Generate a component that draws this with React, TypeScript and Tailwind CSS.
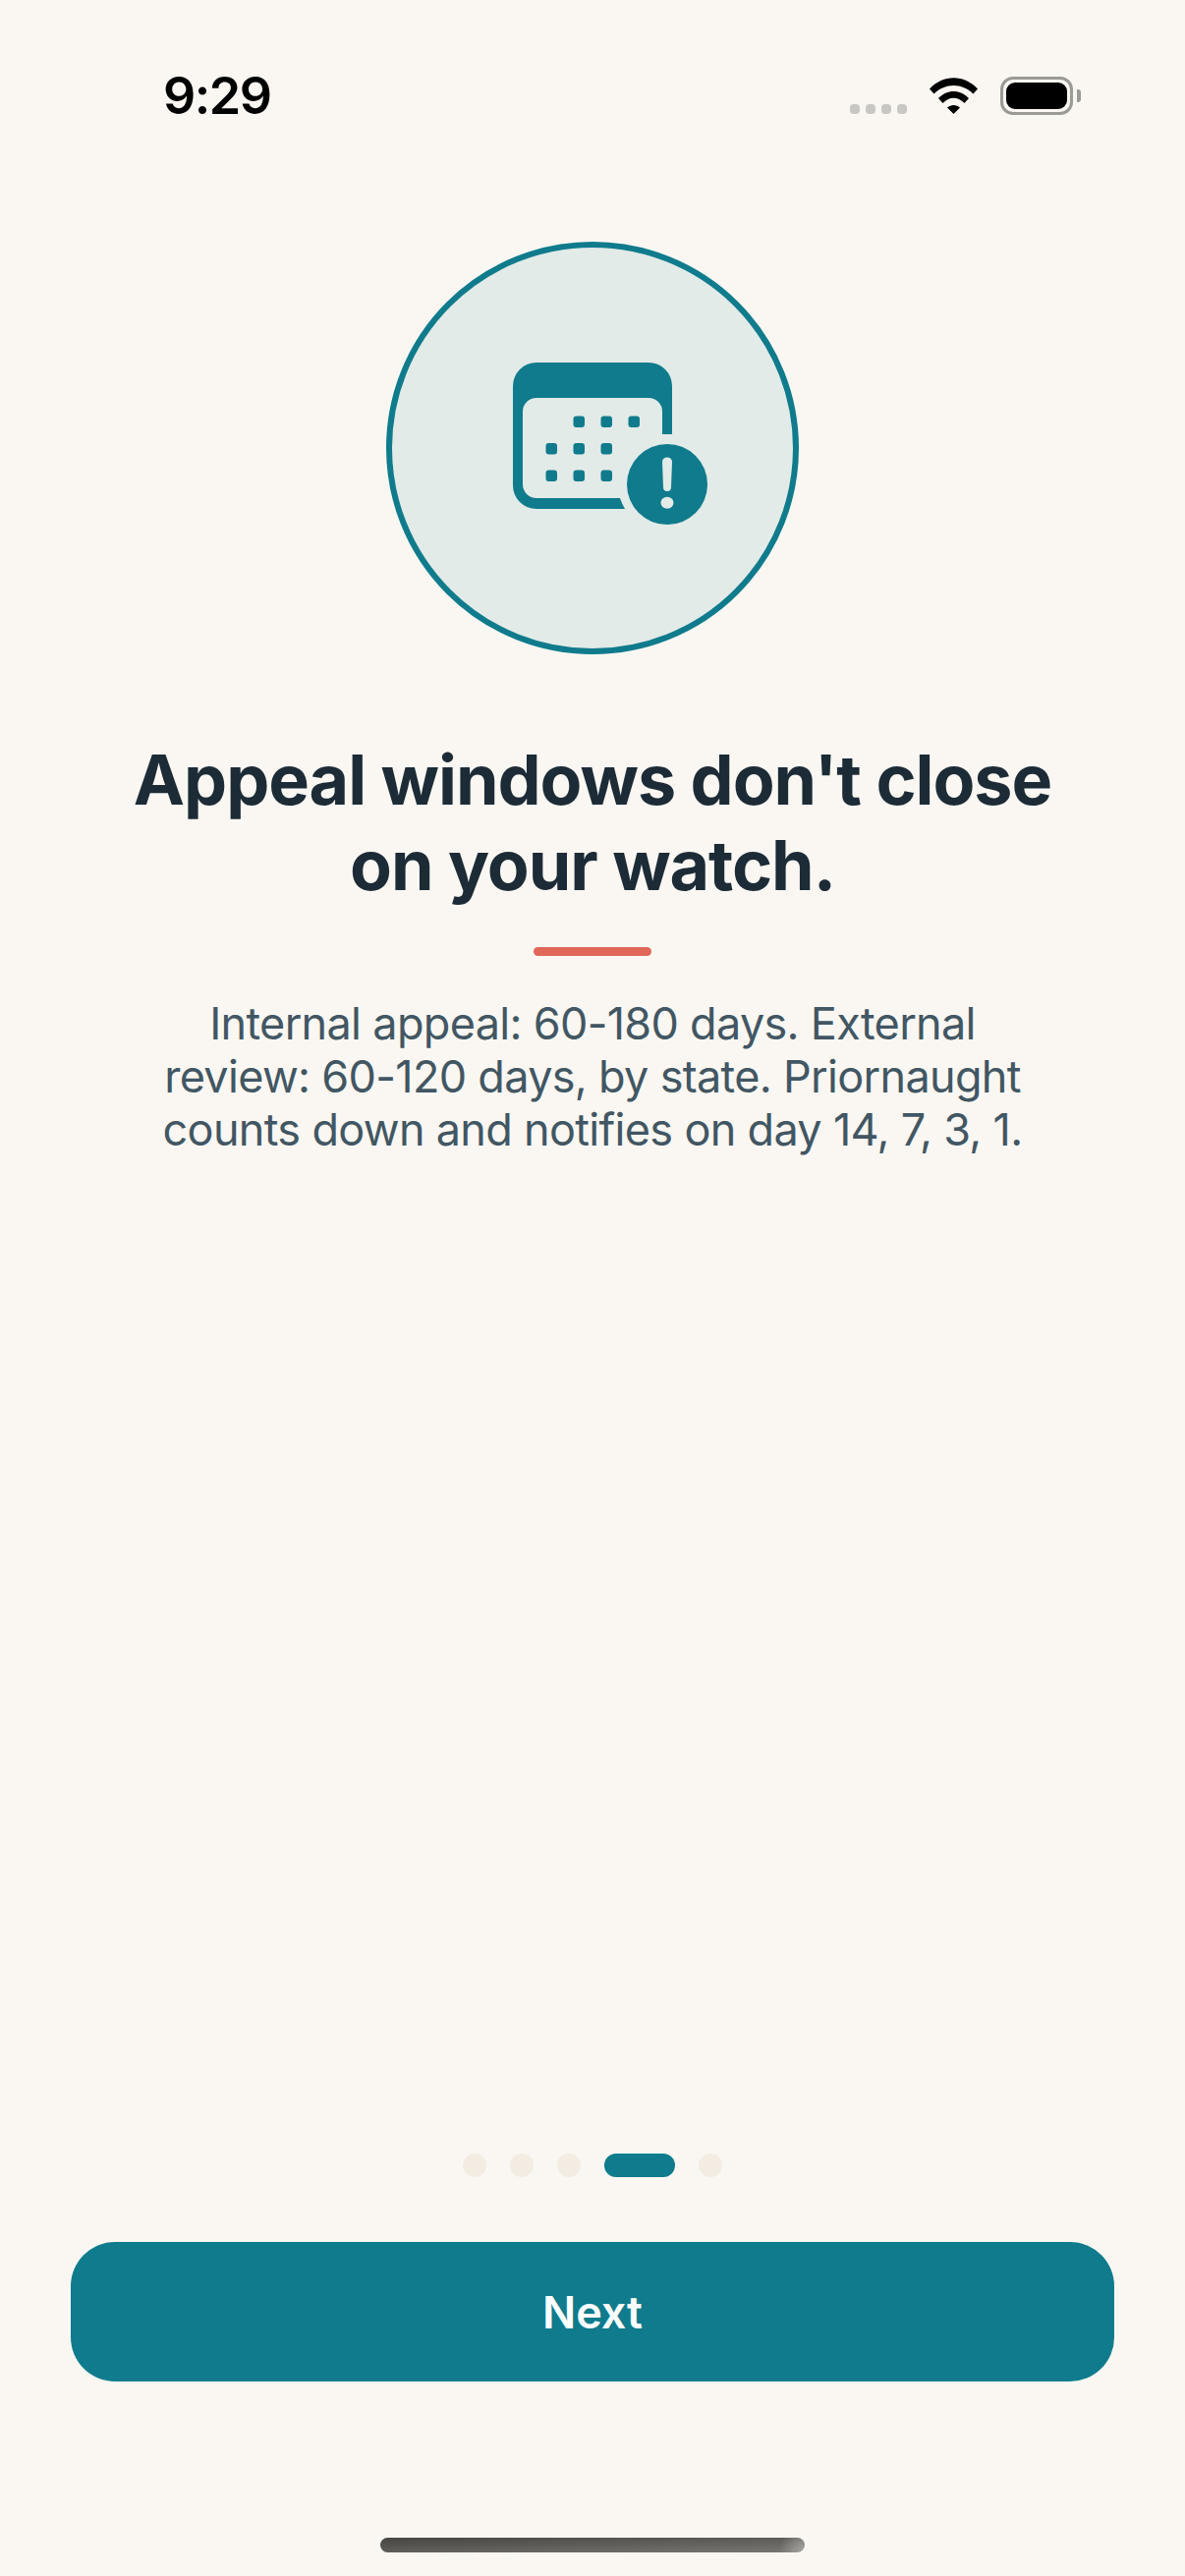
export default function App() {
  const rows = [
    [61.5, 89.5, 117.5].map((x) => [x, 54.5]),
    [33.5, 61.5, 89.5].map((x) => [x, 82]),
    [33.5, 61.5, 89.5].map((x) => [x, 109.5]),
  ].flat();
  return (
    <div className="flex h-[2622px] w-[1206px] flex-col items-center overflow-hidden bg-[#faf7f2] font-['Inter',sans-serif]">
      <div className="flex h-[246px] w-full items-start justify-between pl-[166px] pr-[114px] pt-[72px]">
        <span className="text-[52px] leading-[52px] font-semibold tracking-[-1.5px] text-black">9:29</span>
        <div className="mt-[6px] flex items-start">
          <div className="mr-[23px] mt-[28px] flex gap-[6px]">
            <div className="h-[10px] w-[10px] rounded-[4px] bg-[#c9c7c3]" />
            <div className="h-[10px] w-[10px] rounded-[4px] bg-[#c9c7c3]" />
            <div className="h-[10px] w-[10px] rounded-[4px] bg-[#c9c7c3]" />
            <div className="h-[10px] w-[10px] rounded-[4px] bg-[#c9c7c3]" />
          </div>
          <svg width="49" height="37" viewBox="0 0 49 37" className="mt-[1px] mr-[23px]">
            <path fill="#000" d="M0 11.5 C14 -3.5 35 -3.5 49 11.5 L44.5 16.5 C33 5 16 5 4.5 16.5 Z" />
            <path fill="#000" d="M9 21 C18 11.5 31 11.5 40 21 L35.5 26 C28.5 19 20.5 19 13.5 26 Z" />
            <path fill="#000" d="M18 30.5 C22 27 27 27 31 30.5 L24.5 37 Z" />
          </svg>
          <div className="relative h-[39px] w-[74px] rounded-[13px] border-[3px] border-[#9b9a95] p-[3px]">
            <div className="h-full w-full rounded-[9px] bg-black" />
            <div className="absolute -right-[11px] top-[10px] h-[13px] w-[4px] rounded-r-[3px] bg-[#9b9a95]" />
          </div>
        </div>
      </div>

      <div className="flex h-[420px] w-[420px] shrink-0 items-center justify-center rounded-full border-[6px] border-[#0f7b8c] bg-[#e2ebe8]">
        <svg width="198" height="165" viewBox="0 0 198 165" className="mb-[9px] ml-[36px]">
          <path
            fill="#0f7b8c"
            d="M24 0 H138 A24 24 0 0 1 162 24 V73 H152 V50 A14 14 0 0 0 138 36 H24 A14 14 0 0 0 10 50 V124 A14 14 0 0 0 24 138 H109 Q111 144 114 149 H24 A24 24 0 0 1 0 125 V24 A24 24 0 0 1 24 0 Z"
          />
          {rows.map(([x, y], i) => (
            <rect key={i} x={x} y={y} width="11.5" height="11.5" rx="3" fill="#0f7b8c" />
          ))}
          <circle cx="157" cy="124" r="41" fill="#0f7b8c" />
          <path fill="#e2ebe8" d="M152 101 A5 4.5 0 0 1 162 101 L161 127 A4 4 0 0 1 153 127 Z" />
          <ellipse cx="157" cy="142.7" rx="6.5" ry="6" fill="#e2ebe8" />
        </svg>
      </div>

      <h1 className="mt-[84px] w-full text-center text-[70px] leading-[87px] font-bold tracking-[-1.05px] text-[#1c2b36]">
        Appeal windows don't close
        <br />
        on your watch.
      </h1>
      <div className="mt-[40px] h-[9px] w-[120px] rounded-full bg-[#e0675a]" />
      <p className="mt-[42px] w-full text-center text-[45px] leading-[54px] font-normal tracking-[-0.68px] text-[#425663]">
        Internal appeal: 60-180 days. External
        <br />
        review: 60-120 days, by state. Priornaught
        <br />
        counts down and notifies on day 14, 7, 3, 1.
      </p>

      <div className="flex-1" />

      <div className="flex items-center gap-[24px]">
        <div className="h-[24px] w-[24px] rounded-full bg-[#f2ece3]" />
        <div className="h-[24px] w-[24px] rounded-full bg-[#f2ece3]" />
        <div className="h-[24px] w-[24px] rounded-full bg-[#f2ece3]" />
        <div className="h-[24px] w-[72px] rounded-full bg-[#0f7b8c]" />
        <div className="h-[24px] w-[24px] rounded-full bg-[#f2ece3]" />
      </div>

      <button className="mt-[66px] flex h-[142px] w-[1062px] items-center justify-center rounded-[45px] bg-[#0f7b8c] pt-[2px] text-[45px] font-semibold text-white">
        Next
      </button>

      <div className="mb-[24px] mt-[159px] h-[15px] w-[432px] rounded-full bg-[radial-gradient(circle_at_100%_100%,#a8a7a3,transparent_26px),linear-gradient(178deg,#4b4a46_10%,#787673_100%)]" />
    </div>
  );
}
